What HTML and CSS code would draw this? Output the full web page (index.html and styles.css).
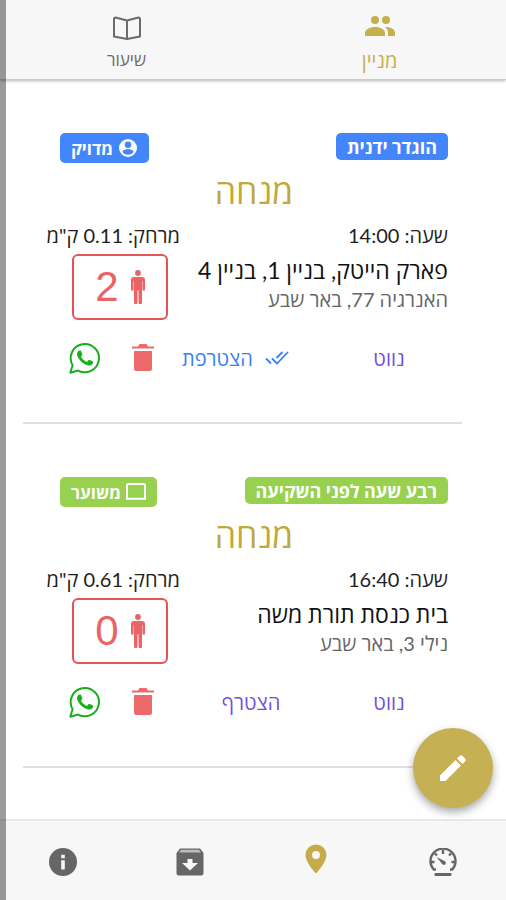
FILE: index.html
```html
<!DOCTYPE html>
<html lang="he" dir="rtl">
<head>
<meta charset="utf-8">
<meta name="viewport" content="width=device-width, initial-scale=1">
<title>מניין</title>
<link rel="stylesheet" href="styles.css">
</head>
<body>
<svg class="sprite" aria-hidden="true">
  <symbol id="person" viewBox="0 0 14 34">
    <circle cx="7" cy="3" r="2.900"/>
    <path d="M3 7h8a3 3 0 0 1 3 3v9.500a1.300 1.300 0 0 1-2.600 0V11h-.4v21.500a1.500 1.500 0 0 1-3.500 0V20.500h-1v12a1.500 1.500 0 0 1-3.500 0V11h-.4v8.500a1.300 1.300 0 0 1-2.600 0V10a3 3 0 0 1 3-3z"/>
  </symbol>
  <symbol id="trash" viewBox="0 0 22 28">
    <path d="M7.500 0h7l1.500 2.500h6v2H0v-2h6zM2 7h18v17.500a2.500 2.500 0 0 1-2.500 2.500h-13A2.500 2.500 0 0 1 2 24.500z"/>
  </symbol>
  <symbol id="whatsapp" viewBox="0 0 24 24">
    <path d="M17.472 14.382c-.297-.149-1.758-.867-2.030-.967-.273-.099-.471-.148-.670.150-.197.297-.767.966-.940 1.164-.173.199-.347.223-.644.075-.297-.150-1.255-.463-2.390-1.475-.883-.788-1.480-1.761-1.653-2.059-.173-.297-.018-.458.130-.606.134-.133.298-.347.446-.520.149-.174.198-.298.298-.497.099-.198.050-.371-.025-.520-.075-.149-.669-1.612-.916-2.207-.242-.579-.487-.500-.669-.510-.173-.008-.371-.010-.570-.010-.198 0-.520.074-.792.372-.272.297-1.040 1.016-1.040 2.479 0 1.462 1.065 2.875 1.213 3.074.149.198 2.096 3.200 5.077 4.487.709.306 1.262.489 1.694.625.712.227 1.360.195 1.871.118.571-.085 1.758-.719 2.006-1.413.248-.694.248-1.289.173-1.413-.074-.124-.272-.198-.570-.347"/>
    <path d="M1 23l1.700-5.600A10.600 10.600 0 1 1 6.800 21.400z" fill="none" stroke="currentColor" stroke-width="1.500" stroke-linejoin="round"/>
  </symbol>
</svg>

<header class="tabs">
  <a class="tab tab-active" href="#minyan">
    <svg class="tab-icon" viewBox="0 1 32 24"><circle cx="11" cy="5" r="4"/><circle cx="22" cy="5" r="4"/><path d="M1 21v-3c0-3.500 5-6 10-6s10 2.500 10 6v3zM22 12c5 0 9 2.500 9 6v3h-7v-3c0-2.300-1-4-2.800-5.900z"/></svg>
    <span>מניין</span>
  </a>
  <a class="tab" href="#lesson">
    <svg class="tab-icon" viewBox="0 0 32 24"><path d="M16 4.500L4.500 1.500Q3 1.500 3 3v17.500L16 23l13-2.500V3q0-1.500-1.500-1.500zv19" fill="none" stroke="currentColor" stroke-width="2" stroke-linejoin="round"/></svg>
    <span>שיעור</span>
  </a>
</header>

<main class="list">
  <article class="card">
    <div class="badges">
      <span class="badge blue">הוגדר ידנית</span>
      <span class="badge blue badge-tall"><svg class="badge-icon" viewBox="0 0 20 20"><path fill-rule="evenodd" d="M10 1a9 9 0 1 0 0 18 9 9 0 0 0 0-18zm0 2.500a3.300 3.300 0 1 1 0 6.600 3.300 3.300 0 0 1 0-6.600zM4.300 13.700C5 11.800 8 11 10 11s5 .8 5.700 2.700C14.500 15.600 12.300 16.700 10 16.700s-4.500-1.100-5.700-3z"/></svg>מדויק</span>
    </div>
    <h2 class="title">מנחה</h2>
    <div class="details">
      <div class="time">שעה: 14:00</div>
      <div class="distance">מרחק: 0.11 ק"מ</div>
      <div class="place">
        <h3 class="name">פארק הייטק, בניין 1, בניין 4</h3>
        <p class="address">האנרגיה 77, באר שבע</p>
      </div>
      <div class="counter"><svg class="person"><use href="#person"/></svg><span>2</span></div>
    </div>
    <div class="actions">
      <button class="text-button">נווט</button>
      <button class="text-button joined"><svg class="checks" viewBox="0 0 24 14"><path d="M1 7.500l5 5M7 7.500l5 5L23 1M11.500 7l6-6" fill="none" stroke="currentColor" stroke-width="1.800"/></svg>הצטרפת</button>
      <button class="icon-button" aria-label="מחיקה"><svg class="trash"><use href="#trash"/></svg></button>
      <button class="icon-button" aria-label="שיתוף"><svg class="whatsapp"><use href="#whatsapp"/></svg></button>
    </div>
  </article>

  <article class="card">
    <div class="badges">
      <span class="badge green">רבע שעה לפני השקיעה</span>
      <span class="badge green badge-tall"><svg class="badge-icon" viewBox="0 0 20 20"><path d="M1 17V3.500Q1 2 2.500 2h15Q19 2 19 3.500V17M0 16.800h20" fill="none" stroke="currentColor" stroke-width="2"/></svg>משוער</span>
    </div>
    <h2 class="title">מנחה</h2>
    <div class="details">
      <div class="time">שעה: 16:40</div>
      <div class="distance">מרחק: 0.61 ק"מ</div>
      <div class="place">
        <h3 class="name">בית כנסת תורת משה</h3>
        <p class="address">נילי 3, באר שבע</p>
      </div>
      <div class="counter"><svg class="person"><use href="#person"/></svg><span>0</span></div>
    </div>
    <div class="actions">
      <button class="text-button">נווט</button>
      <button class="text-button">הצטרף</button>
      <button class="icon-button" aria-label="מחיקה"><svg class="trash"><use href="#trash"/></svg></button>
      <button class="icon-button" aria-label="שיתוף"><svg class="whatsapp"><use href="#whatsapp"/></svg></button>
    </div>
  </article>
</main>

<button class="fab" aria-label="עריכה"><svg class="pencil" viewBox="0 0 28 28"><path d="M1 21.500L16.500 6l5.500 5.500L6.500 27H1zM18 4.500l2.700-2.700q1.300-1.300 2.600 0l2.900 2.900q1.300 1.300 0 2.600L23.500 10z"/></svg></button>

<nav class="bottom">
  <a class="nav-item" href="#speed" aria-label="לוח"><svg class="nav-icon" viewBox="0 0 28 28"><path d="M7 21.500H4.700A12.500 12.500 0 1 1 23.300 21.500H21M14 2v4M6 5.500l2 2M22 5.500l-2 2M2 14h3.500M26 14h-3.500" fill="none" stroke="currentColor" stroke-width="2.400"/><path d="M7.500 9l8 4a2 2 0 1 1-2.500 2.700z"/><rect x="5.500" y="25" width="17" height="3" rx="1"/></svg></a>
  <a class="nav-item nav-active" href="#map" aria-label="מפה"><svg class="nav-pin" viewBox="0 0 22 30"><path fill-rule="evenodd" d="M11 .5A10.500 10.500 0 0 0 .5 11C.5 18.500 11 29.500 11 29.500S21.500 18.500 21.500 11A10.500 10.500 0 0 0 11 .5zm0 6.500a4 4 0 1 1 0 8 4 4 0 0 1 0-8z"/></svg></a>
  <a class="nav-item" href="#archive" aria-label="ארכיון"><svg class="nav-icon" viewBox="0 0 28 28"><path fill-rule="evenodd" d="M4 .5h20l3.500 4.500v20a2.500 2.500 0 0 1-2.500 2.500H3A2.500 2.500 0 0 1 .5 25V5zM11.500 11v4H6l8 7.500 8-7.500h-5.500v-4z"/><path class="archive-lid" d="M5 1.800h18L25 4.500H3z"/></svg></a>
  <a class="nav-item" href="#info" aria-label="מידע"><svg class="nav-icon" viewBox="0 0 28 28"><path fill-rule="evenodd" d="M14 0a14 14 0 1 0 0 28 14 14 0 0 0 0-28zm-1.800 6.800h3.600v3.400h-3.600zm0 5.400h3.600v9.300h-3.600z"/></svg></a>
</nav>
<div class="edge"></div>
</body>
</html>
```
FILE: styles.css
```css
* { box-sizing: border-box; }

body {
  margin: 0;
  min-height: 100vh;
  display: flex;
  flex-direction: column;
  position: relative;
  background: #fff;
  color: #222;
  font-family: Lato, "Open Sans", "Noto Sans", sans-serif;
}

svg { display: block; fill: currentColor; }
a { text-decoration: none; color: inherit; }
button { border: 0; background: none; padding: 0; font-family: inherit; cursor: pointer; }
h2, h3, p { margin: 0; font-weight: 400; }
.sprite { display: none; }

.tabs {
  display: flex;
  height: 80px;
  background: #f7f7f7;
  border-bottom: 1px solid #ccc;
  box-shadow: 0 1px 3px rgba(0, 0, 0, 0.3);
}
.tab {
  flex: 1;
  display: flex;
  flex-direction: column;
  align-items: center;
  gap: 8px;
  padding-top: 16px;
  color: #6b6b6b;
  font-size: 17px;
  line-height: 24px;
}
.tab-active { color: #c5b04c; font-size: 20px; }
.tab-icon { width: 32px; height: 24px; }

.list { flex: 1; padding: 0 44px 0 23px; }
.card {
  padding: 53px 14px 44px 22px;
  border-bottom: 2px solid #e0e0e0;
}
.badges {
  display: flex;
  justify-content: space-between;
  align-items: flex-start;
  height: 32px;
  padding-left: 15px;
}
.badge {
  display: flex;
  align-items: center;
  gap: 5px;
  height: 27px;
  padding: 0 11px;
  border-radius: 5px;
  color: #fff;
  font-size: 18px;
  font-weight: 700;
  white-space: nowrap;
}
.badge-tall { height: 30px; font-size: 17px; }
.badge-icon { width: 20px; height: 20px; }
.blue { background: #4385fb; }
.green { background: #98d150; }

.title {
  padding-left: 15px;
  color: #bfa93c;
  font-size: 34px;
  line-height: 52px;
  text-align: center;
}
.details {
  display: grid;
  grid-template-columns: 1fr 135px;
  font-size: 20px;
  line-height: 24px;
}
.details > * { white-space: nowrap; }
.time, .distance { padding-top: 6px; height: 37px; }
.name { font-size: 23px; line-height: 32px; color: #111; }
.address { font-size: 20px; line-height: 26px; color: #666; }
.counter {
  display: flex;
  align-items: center;
  justify-content: center;
  gap: 12px;
  width: 96px;
  height: 66px;
  margin-right: 12px;
  border: 2px solid #e65356;
  border-radius: 6px;
  color: #e96464;
  font-family: "Liberation Sans", sans-serif;
  font-size: 42px;
}
.person { width: 14px; height: 34px; }

.actions {
  display: grid;
  grid-template-columns: 118fr 158fr 58px 58px;
  align-items: center;
  height: 40px;
  margin-top: 18px;
  padding-left: 11px;
}
.text-button { color: #6f4fe0; font-size: 20px; white-space: nowrap; }
.joined {
  display: flex;
  align-items: center;
  justify-content: flex-end;
  gap: 12px;
  padding-left: 10px;
  color: #3880f5;
}
.checks { width: 24px; height: 14px; }
.icon-button { display: flex; justify-content: center; }
.trash { width: 22px; height: 28px; color: #ec6a69; }
.whatsapp { width: 32px; height: 32px; color: #17b01c; }

.fab {
  position: absolute;
  right: 13px;
  bottom: 92px;
  display: flex;
  align-items: center;
  justify-content: center;
  width: 80px;
  height: 80px;
  border-radius: 50%;
  background: #c5b154;
  color: #fff;
  box-shadow: 0 4px 8px rgba(0, 0, 0, 0.35);
}
.pencil { width: 28px; height: 28px; }

.bottom {
  display: flex;
  height: 81px;
  background: #f7f7f7;
  border-top: 2px solid #e9e9e9;
  color: #666;
}
.nav-item {
  flex: 1;
  display: flex;
  align-items: center;
  justify-content: center;
  padding-top: 3px;
}
.nav-active { color: #c5ac48; padding: 0 0 4px; }
.nav-icon { width: 28px; height: 28px; }
.nav-pin { width: 22px; height: 30px; }
.archive-lid { fill: #bbb; }

.edge {
  position: absolute;
  top: 0;
  bottom: 0;
  left: 0;
  width: 6px;
  background: rgba(0, 0, 0, 0.39);
}
```
